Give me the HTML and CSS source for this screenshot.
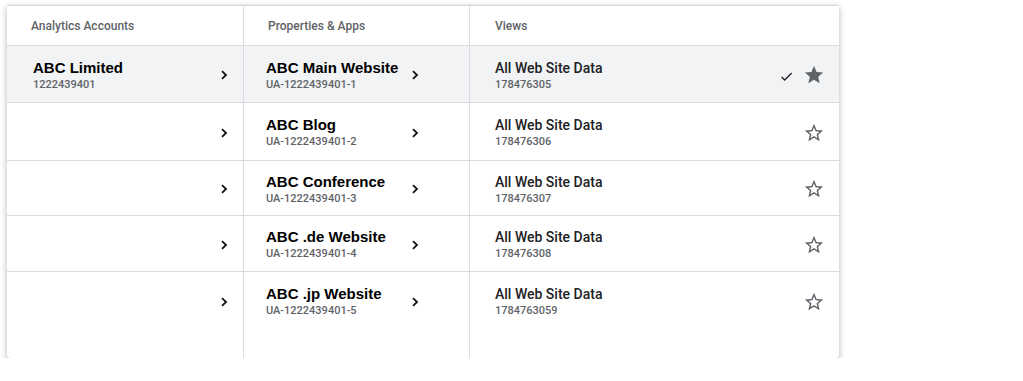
FILE: index.html
```html
<!DOCTYPE html>
<html lang="en">
<head>
    <meta charset="UTF-8">
    <title>Analytics - Account Picker</title>
    <link rel="stylesheet" href="styles.css">
</head>
<body>
    <div class="panel">
        <div class="row head">
            <div class="cell">Analytics Accounts</div>
            <div class="cell">Properties &amp; Apps</div>
            <div class="cell">Views</div>
        </div>

        <div class="row selected" style="height: 57px;">
            <div class="cell account">
                <div class="text">
                    <div class="name">ABC Limited</div>
                    <div class="sub">1222439401</div>
                </div>
                <svg class="chev" viewBox="0 0 8 10"><polyline points="2,1.2 6,5 2,8.8"/></svg>
            </div>
            <div class="cell prop">
                <div class="text">
                    <div class="name">ABC Main Website</div>
                    <div class="sub">UA-1222439401-1</div>
                </div>
                <svg class="chev" viewBox="0 0 8 10"><polyline points="2,1.2 6,5 2,8.8"/></svg>
            </div>
            <div class="cell view">
                <div class="text">
                    <div class="vname">All Web Site Data</div>
                    <div class="sub">178476305</div>
                </div>
                <svg class="check" viewBox="0 0 24 24"><path d="M9 16.17L4.83 12l-1.42 1.41L9 19 21 7l-1.41-1.41z"/></svg>
                <svg class="star" viewBox="0 0 24 24"><path d="M12 17.27L18.18 21l-1.64-7.03L22 9.24l-7.19-.61L12 2 9.19 8.63 2 9.24l5.46 4.73L5.82 21z"/></svg>
            </div>
        </div>

        <div class="row" style="height: 58px;">
            <div class="cell account">
                <div class="text"></div>
                <svg class="chev" viewBox="0 0 8 10"><polyline points="2,1.2 6,5 2,8.8"/></svg>
            </div>
            <div class="cell prop">
                <div class="text">
                    <div class="name">ABC Blog</div>
                    <div class="sub">UA-1222439401-2</div>
                </div>
                <svg class="chev" viewBox="0 0 8 10"><polyline points="2,1.2 6,5 2,8.8"/></svg>
            </div>
            <div class="cell view">
                <div class="text">
                    <div class="vname">All Web Site Data</div>
                    <div class="sub">178476306</div>
                </div>
                <svg class="star" viewBox="0 0 24 24"><path d="M22 9.24l-7.19-.62L12 2 9.19 8.63 2 9.24l5.46 4.73L5.82 21 12 17.27 18.18 21l-1.63-7.03L22 9.24zM12 15.4l-3.76 2.27 1-4.28-3.32-2.88 4.38-.38L12 6.1l1.71 4.04 4.38.38-3.32 2.88 1 4.28L12 15.4z"/></svg>
            </div>
        </div>

        <div class="row" style="height: 55px;">
            <div class="cell account">
                <div class="text"></div>
                <svg class="chev" viewBox="0 0 8 10"><polyline points="2,1.2 6,5 2,8.8"/></svg>
            </div>
            <div class="cell prop">
                <div class="text">
                    <div class="name">ABC Conference</div>
                    <div class="sub">UA-1222439401-3</div>
                </div>
                <svg class="chev" viewBox="0 0 8 10"><polyline points="2,1.2 6,5 2,8.8"/></svg>
            </div>
            <div class="cell view">
                <div class="text">
                    <div class="vname">All Web Site Data</div>
                    <div class="sub">178476307</div>
                </div>
                <svg class="star" viewBox="0 0 24 24"><path d="M22 9.24l-7.19-.62L12 2 9.19 8.63 2 9.24l5.46 4.73L5.82 21 12 17.27 18.18 21l-1.63-7.03L22 9.24zM12 15.4l-3.76 2.27 1-4.28-3.32-2.88 4.38-.38L12 6.1l1.71 4.04 4.38.38-3.32 2.88 1 4.28L12 15.4z"/></svg>
            </div>
        </div>

        <div class="row" style="height: 56px;">
            <div class="cell account">
                <div class="text"></div>
                <svg class="chev" viewBox="0 0 8 10"><polyline points="2,1.2 6,5 2,8.8"/></svg>
            </div>
            <div class="cell prop">
                <div class="text">
                    <div class="name">ABC .de Website</div>
                    <div class="sub">UA-1222439401-4</div>
                </div>
                <svg class="chev" viewBox="0 0 8 10"><polyline points="2,1.2 6,5 2,8.8"/></svg>
            </div>
            <div class="cell view">
                <div class="text">
                    <div class="vname">All Web Site Data</div>
                    <div class="sub">178476308</div>
                </div>
                <svg class="star" viewBox="0 0 24 24"><path d="M22 9.24l-7.19-.62L12 2 9.19 8.63 2 9.24l5.46 4.73L5.82 21 12 17.27 18.18 21l-1.63-7.03L22 9.24zM12 15.4l-3.76 2.27 1-4.28-3.32-2.88 4.38-.38L12 6.1l1.71 4.04 4.38.38-3.32 2.88 1 4.28L12 15.4z"/></svg>
            </div>
        </div>

        <div class="row last">
            <div class="cell account">
                <div class="text"></div>
                <svg class="chev" viewBox="0 0 8 10"><polyline points="2,1.2 6,5 2,8.8"/></svg>
            </div>
            <div class="cell prop">
                <div class="text">
                    <div class="name">ABC .jp Website</div>
                    <div class="sub">UA-1222439401-5</div>
                </div>
                <svg class="chev" viewBox="0 0 8 10"><polyline points="2,1.2 6,5 2,8.8"/></svg>
            </div>
            <div class="cell view">
                <div class="text">
                    <div class="vname">All Web Site Data</div>
                    <div class="sub">1784763059</div>
                </div>
                <svg class="star" viewBox="0 0 24 24"><path d="M22 9.24l-7.19-.62L12 2 9.19 8.63 2 9.24l5.46 4.73L5.82 21 12 17.27 18.18 21l-1.63-7.03L22 9.24zM12 15.4l-3.76 2.27 1-4.28-3.32-2.88 4.38-.38L12 6.1l1.71 4.04 4.38.38-3.32 2.88 1 4.28L12 15.4z"/></svg>
            </div>
        </div>
    </div>
</body>
</html>
```

FILE: styles.css
```css
* {
    margin: 0;
    padding: 0;
    box-sizing: border-box;
}
body {
    font-family: 'Roboto', sans-serif;
    background: #fff;
    color: #202124;
}
.panel {
    margin: 5px 0 0 7px;
    width: 832px;
    border-top: 1px solid #d6d6d6;
    border-radius: 0 0 4px 4px;
    background: #fff;
    box-shadow: 0 2px 6px rgba(0, 0, 0, 0.3);
    overflow: hidden;
}
.row {
    display: grid;
    grid-template-columns: 237px 226px 1fr;
    border-bottom: 1px solid #dadce0;
}
.row.selected {
    background: #f1f3f4;
}
.row.last {
    height: 86px;
    border-bottom: none;
}
.row.last .cell {
    padding-bottom: 29px;
}
.cell {
    display: flex;
    align-items: center;
    padding-top: 2px;
    border-right: 1px solid #dadce0;
}
.cell:last-child {
    border-right: none;
}
.head {
    height: 40px;
}
.head .cell {
    font-size: 12px;
    font-weight: 500;
    color: #5f6368;
    padding-left: 24px;
    padding-top: 1px;
}
.head .cell:nth-child(3) {
    padding-left: 25px;
}
.text {
    flex: 1;
}
.account {
    padding-left: 26px;
    padding-right: 15px;
}
.prop {
    padding-left: 22px;
}
.prop .text {
    flex: none;
    width: 145px;
}
.view {
    padding-left: 25px;
    padding-right: 14px;
}
.name {
    font-family: 'Liberation Sans', Arial, sans-serif;
    font-weight: bold;
    font-size: 15px;
    line-height: 18px;
    color: #000;
}
.vname {
    font-size: 14px;
    font-weight: 500;
    line-height: 18px;
    color: #202124;
}
.sub {
    font-size: 11px;
    font-weight: 500;
    line-height: 14px;
    color: #5f6368;
    margin-top: 1px;
}
.chev {
    width: 8px;
    height: 10px;
    fill: none;
    stroke: #111;
    stroke-width: 1.8;
}
.check {
    width: 15px;
    height: 15px;
    fill: #202124;
    margin-right: 9px;
    margin-top: 2px;
}
.star {
    width: 22px;
    height: 22px;
    fill: #5f6368;
}
```
